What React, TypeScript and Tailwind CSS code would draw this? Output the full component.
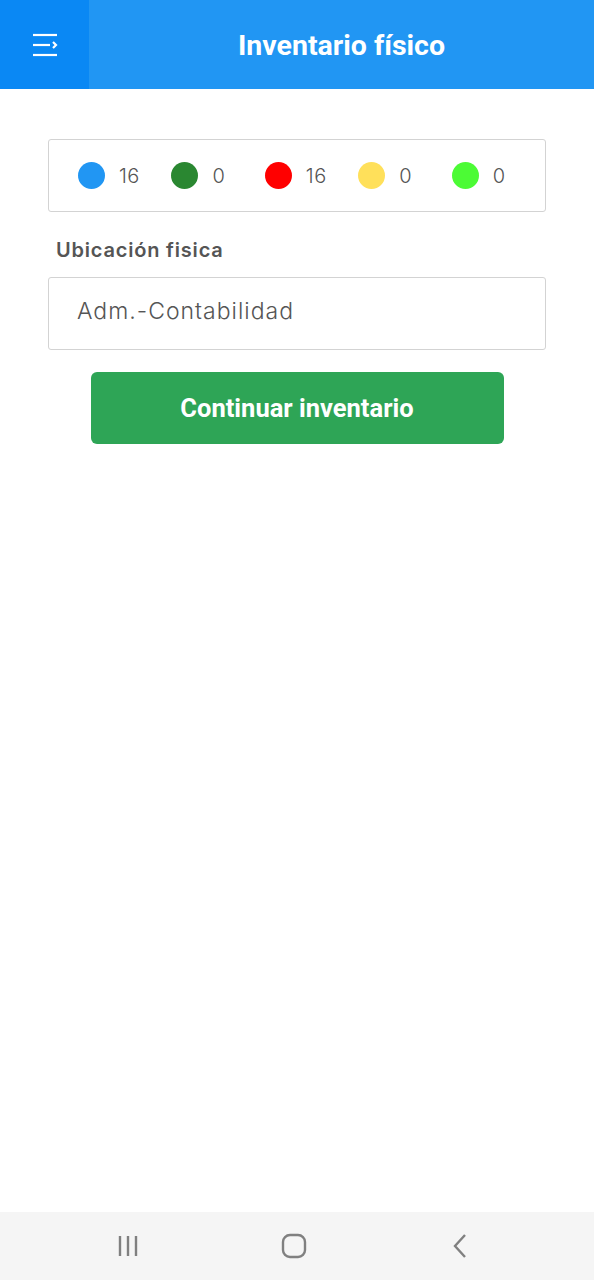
import React from "react";

const counts = [
  { color: "bg-[#2196f3]", value: "16" },
  { color: "bg-[#2a8731]", value: "0" },
  { color: "bg-[#ff0000]", value: "16" },
  { color: "bg-[#ffe05a]", value: "0" },
  { color: "bg-[#4cfb35]", value: "0" },
];

const App = () => {
  return (
    <div className="w-[594px] h-[1280px] flex flex-col bg-white font-['Inter',sans-serif]">
      <header className="h-[89px] flex bg-[#2196f3]">
        <button className="w-[89px] h-full flex items-center justify-center bg-[#0a88f4]">
          <svg width="28" height="24" viewBox="0 0 28 24" fill="none" stroke="white" strokeWidth="2.2">
            <path d="M2 2h24" />
            <path d="M2 12h17" />
            <path d="M22 9l3 3-3 3" />
            <path d="M2 22h24" />
          </svg>
        </button>
        <h1 className="flex-1 flex items-center justify-center pt-1 text-white text-[28.5px] font-bold font-['Roboto',sans-serif]">
          Inventario físico
        </h1>
      </header>

      <main className="flex-1 px-12 pt-[50px]">
        <div className="h-[73px] flex items-center pl-[29px] border border-[#d3d3d3] rounded-[3px]">
          {counts.map((c, i) => (
            <div key={i} className="w-[93.5px] flex items-center gap-[14px]">
              <span className={`w-[27px] h-[27px] rounded-full ${c.color}`} />
              <span className="text-[20px] font-light tracking-[0.5px] text-[#555]">{c.value}</span>
            </div>
          ))}
        </div>

        <label className="block mt-[23px] ml-2 text-[20px] font-semibold tracking-[0.8px] text-[#555]">
          Ubicación fisica
        </label>
        <div className="mt-[12px] h-[73px] flex items-center pb-[4px] px-[28px] border border-[#d3d3d3] rounded-[3px] text-[23px] font-light tracking-[1px] text-[#555]">
          Adm.-Contabilidad
        </div>

        <div className="mt-[22px] flex justify-center">
          <button className="w-[413px] h-[72px] rounded-[6px] bg-[#2ea556] text-white text-[25.5px] font-bold font-['Roboto',sans-serif]">
            Continuar inventario
          </button>
        </div>
      </main>

      <nav className="h-[68px] flex items-center pl-[45px] bg-[#f5f5f5]">
        <div className="w-[166px] flex justify-center">
          <svg width="24" height="24" viewBox="0 0 24 24" fill="none" stroke="#808080" strokeWidth="2.4">
            <path d="M4 2v20M12 2v20M20 2v20" />
          </svg>
        </div>
        <div className="w-[166px] flex justify-center">
          <svg width="26" height="26" viewBox="0 0 26 26" fill="none" stroke="#808080" strokeWidth="2.4">
            <rect x="2" y="2" width="22" height="22" rx="7" />
          </svg>
        </div>
        <div className="w-[166px] flex justify-center">
          <svg width="16" height="26" viewBox="0 0 16 26" fill="none" stroke="#808080" strokeWidth="2.4">
            <path d="M13 2L3 13l10 11" />
          </svg>
        </div>
      </nav>
    </div>
  );
};

export default App;
